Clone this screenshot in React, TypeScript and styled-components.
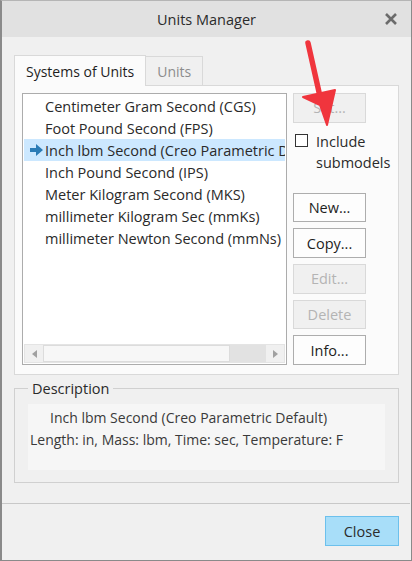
import { FC } from "react";
import styled, { createGlobalStyle } from "styled-components";

const GlobalStyle = createGlobalStyle`
  html, body {
    margin: 0;
    padding: 0;
    background: #f0f0f0;
  }
  body {
    font-family: "Open Sans", "Noto Sans", sans-serif;
    font-size: 14px;
    color: #1e1e1e;
  }
`;

const Window = styled("div")`
  position: relative;
  box-sizing: border-box;
  width: 412px;
  height: 561px;
  border: 1px solid #8a8a8a;
  border-left-width: 2px;
  border-top-color: #b5b5b5;
  background: #f0f0f0;
  display: flex;
  flex-direction: column;
  overflow: hidden;
`;

const TitleBar = styled("div")`
  height: 36px;
  flex: none;
  background: #e1e1e1;
  display: flex;
  align-items: center;
  justify-content: center;
  position: relative;
  font-size: 14.5px;
  color: #2b2b2b;
`;

const CloseX = styled("span")`
  position: absolute;
  right: 12px;
  top: 10px;
  width: 16px;
  height: 16px;
`;

const Body = styled("div")`
  flex: 1;
  padding: 18px 12px 0 12px;
  display: flex;
  flex-direction: column;
`;

const TabStrip = styled("div")`
  display: flex;
  align-items: flex-end;
  height: 30px;
`;

const Tab = styled("div")<{ $active?: boolean }>`
  box-sizing: border-box;
  height: ${({ $active }) => ($active ? "31px" : "29px")};
  padding: 0 11px;
  display: flex;
  align-items: center;
  font-size: 14px;
  border: 1px solid #d9d9d9;
  border-bottom: none;
  margin-left: ${({ $active }) => ($active ? "0" : "-1px")};
  background: ${({ $active }) => ($active ? "#fbfbfb" : "#f0f0f0")};
  color: ${({ $active }) => ($active ? "#1e1e1e" : "#8c8c8c")};
  position: relative;
  z-index: ${({ $active }) => ($active ? 2 : 1)};
  margin-bottom: ${({ $active }) => ($active ? "-1px" : "0")};
`;

const Panel = styled("div")`
  box-sizing: border-box;
  height: 290px;
  border: 1px solid #d9d9d9;
  background: #fbfbfb;
  padding: 7px 32px 9px 7px;
  display: flex;
  gap: 6px;
`;

const ListBox = styled("div")`
  box-sizing: border-box;
  width: 265px;
  border: 1px solid #acacac;
  background: #ffffff;
  display: flex;
  flex-direction: column;
  padding: 1px;
`;

const Rows = styled("div")`
  flex: 1;
  padding-top: 0;
  overflow: hidden;
`;

const Row = styled("div")<{ $selected?: boolean }>`
  height: 22px;
  display: flex;
  align-items: center;
  white-space: nowrap;
  font-size: 14.5px;
  background: ${({ $selected }) => ($selected ? "#cce8ff" : "transparent")};
  color: #2a2a2a;
`;

const RowMark = styled("span")`
  width: 13px;
  flex: none;
  display: flex;
  margin-left: 6px;
  margin-right: 2px;
`;

const HScroll = styled("div")`
  height: 17px;
  flex: none;
  display: flex;
  align-items: stretch;
  background: #f0f0f0;
  border: 1px solid #e4e4e4;
`;

const ScrollArrow = styled("span")`
  width: 18px;
  display: flex;
  align-items: center;
  justify-content: center;
`;

const ScrollTrack = styled("div")`
  flex: 1;
  display: flex;
  background: #e2e2e2;
`;

const ScrollThumb = styled("div")`
  box-sizing: border-box;
  width: 187px;
  background: #f7f7f7;
  border: 1px solid #dcdcdc;
`;

const ButtonColumn = styled("div")`
  width: 73px;
  display: flex;
  flex-direction: column;
`;

const Button = styled("button")<{ $gap?: number }>`
  box-sizing: border-box;
  width: 73px;
  height: 30px;
  margin-top: ${({ $gap }) => $gap ?? 6}px;
  font-family: inherit;
  font-size: 14.5px;
  border: 1px solid #adadad;
  background: #fdfdfd;
  color: #1e1e1e;
  padding: 0;
  &:disabled {
    border-color: #d9d9d9;
    background: #f0f0f0;
    color: #b4b4b4;
  }
`;

const CheckRow = styled("label")`
  display: flex;
  gap: 8px;
  margin-top: 8px;
  margin-left: 2px;
  font-size: 14.5px;
  line-height: 21px;
  color: #2a2a2a;
  width: 104px;
`;

const CheckBox = styled("span")`
  box-sizing: border-box;
  flex: none;
  width: 13px;
  height: 13px;
  margin-top: 3px;
  border: 1px solid #333;
  background: #fff;
`;

const Group = styled("fieldset")`
  box-sizing: border-box;
  height: 104px;
  margin: 4px 0 0 0;
  padding: 6px 13px 13px 13px;
  border: 1px solid #d0d0d0;
  min-width: 0;
`;

const Legend = styled("legend")`
  padding: 0 4px;
  margin-left: 0;
  font-size: 14.5px;
  color: #2a2a2a;
`;

const DescBox = styled("div")`
  height: 63px;
  background: #f6f6f6;
  padding: 3px 2px 0;
  font-size: 14px;
  line-height: 22px;
  color: #3a3a3a;
`;

const DescTitle = styled("div")`
  padding-left: 20px;
`;

const Footer = styled("div")`
  margin-top: 20px;
  border-top: 1px solid #c8c8c8;
  margin-left: -12px;
  margin-right: -11px;
  padding: 12px 11px 0 0;
  display: flex;
  justify-content: flex-end;
`;

const PrimaryButton = styled("button")`
  box-sizing: border-box;
  width: 74px;
  height: 30px;
  font-family: inherit;
  font-size: 14.5px;
  background: #a8def9;
  border: 1px solid #6cc0ec;
  color: #2b2b2b;
`;

const Pointer = styled("svg")`
  position: absolute;
  left: 0;
  top: 0;
  pointer-events: none;
`;

const systems = [
  "Centimeter Gram Second (CGS)",
  "Foot Pound Second (FPS)",
  "Inch lbm Second (Creo Parametric Default)",
  "Inch Pound Second (IPS)",
  "Meter Kilogram Second (MKS)",
  "millimeter Kilogram Sec (mmKs)",
  "millimeter Newton Second (mmNs)",
];

const CurrentArrow: FC = () => (
  <svg width="13" height="12" viewBox="0 0 13 12">
    <path d="M0 4 H6 V0 L13 6 L6 12 V8 H0 Z" fill="#2b7cb6" />
  </svg>
);

const App: FC = () => {
  return (
    <>
      <GlobalStyle />
      <Window>
        <TitleBar>
          Units Manager
          <CloseX>
            <svg width="16" height="16" viewBox="0 0 16 16">
              <path d="M3 3 L13 13 M13 3 L3 13" stroke="#6b6b6b" strokeWidth="2.6" />
            </svg>
          </CloseX>
        </TitleBar>
        <Body>
          <TabStrip>
            <Tab $active>Systems of Units</Tab>
            <Tab>Units</Tab>
          </TabStrip>
          <Panel>
            <ListBox>
              <Rows>
                {systems.map((name, i) => (
                  <Row key={name} $selected={i === 2}>
                    <RowMark>{i === 2 && <CurrentArrow />}</RowMark>
                    {name}
                  </Row>
                ))}
              </Rows>
              <HScroll>
                <ScrollArrow>
                  <svg width="5" height="8" viewBox="0 0 5 8">
                    <path d="M5 0 V8 L0 4 Z" fill="#a0a0a0" />
                  </svg>
                </ScrollArrow>
                <ScrollTrack>
                  <ScrollThumb />
                </ScrollTrack>
                <ScrollArrow>
                  <svg width="5" height="8" viewBox="0 0 5 8">
                    <path d="M0 0 V8 L5 4 Z" fill="#a0a0a0" />
                  </svg>
                </ScrollArrow>
              </HScroll>
            </ListBox>
            <ButtonColumn>
              <Button $gap={0} disabled>
                Set...
              </Button>
              <CheckRow>
                <CheckBox />
                <span>
                  Include
                  <br />
                  submodels
                </span>
              </CheckRow>
              <Button $gap={20}>New...</Button>
              <Button>Copy...</Button>
              <Button disabled>Edit...</Button>
              <Button disabled>Delete</Button>
              <Button>Info...</Button>
            </ButtonColumn>
          </Panel>
          <Group>
            <Legend>Description</Legend>
            <DescBox>
              <DescTitle>Inch lbm Second (Creo Parametric Default)</DescTitle>
              <div>Length: in, Mass: lbm, Time: sec, Temperature: F</div>
            </DescBox>
          </Group>
          <Footer>
            <PrimaryButton>Close</PrimaryButton>
          </Footer>
        </Body>
        <Pointer width="412" height="561" viewBox="0 0 412 561">
          <path d="M306 42 L319 100" stroke="#f0353d" strokeWidth="5.5" strokeLinecap="round" />
          <path d="M301 96 L333 89 L325 124 L318 104 Z" fill="#f0353d" stroke="#f0353d" strokeWidth="2" strokeLinejoin="round" />
        </Pointer>
      </Window>
    </>
  );
};

export default App;
